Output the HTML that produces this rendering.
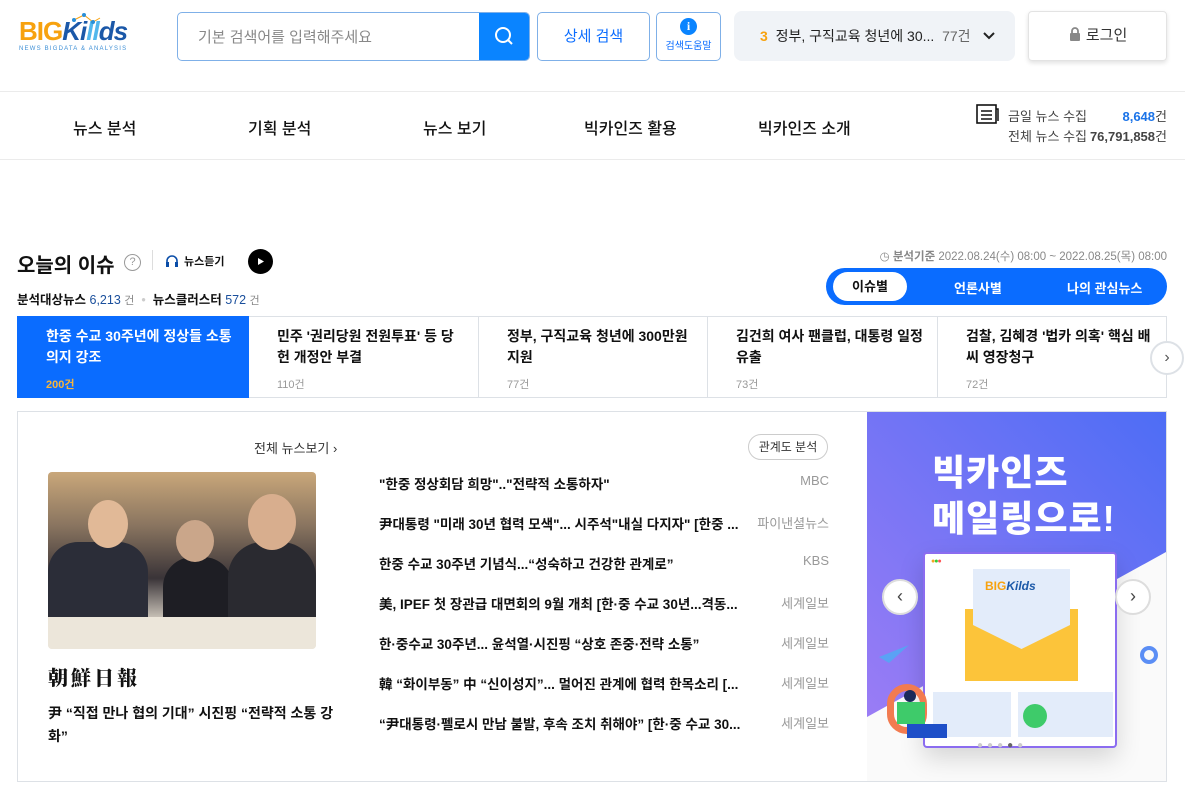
<!DOCTYPE html>
<html><head><meta charset="utf-8"><style>
*{box-sizing:border-box;margin:0;padding:0}
body{width:1185px;height:797px;overflow:hidden;background:#fff;font-family:"Liberation Sans","Noto Sans CJK KR",sans-serif;color:#111;position:relative}
.a{position:absolute}
.nav{font-size:16px;font-weight:500;top:115px}
.card{position:absolute;top:316px;height:82px;border:1px solid #dde1e6;border-left:none;padding:9px 0 0 28px;font-size:14px;font-weight:700;line-height:21px;color:#111}
.card small{display:block;font-size:11px;font-weight:400;color:#999;margin-top:7px}
.li{position:absolute;left:379px;width:450px;font-size:13.5px;font-weight:700;white-space:nowrap}
.li span{position:absolute;right:0;font-weight:400;color:#999;font-size:13px}
</style></head><body>
<!-- logo -->
<div class="a" style="left:19px;top:16px;font-size:26px;font-weight:900;letter-spacing:-1px;line-height:30px">
<span style="color:#f7a20f">BIG</span><span style="color:#1b58a8;font-style:italic">Ki</span><span style="color:#52b7ec;font-style:italic">ll</span><span style="color:#1b58a8;font-style:italic">ds</span></div>
<svg class="a" style="left:72px;top:12px" width="30" height="14"><polyline points="2,8 12,3 21,10 28,6" fill="none" stroke="#f7a20f" stroke-width="1"/><circle cx="2" cy="8" r="2" fill="#2a8fd8"/><circle cx="12" cy="3" r="2" fill="#2a8fd8"/><circle cx="21" cy="10" r="2" fill="#2a8fd8"/></svg>
<div class="a" style="left:19px;top:46px;font-size:6px;letter-spacing:1.2px;color:#3d8fd6">NEWS BIGDATA &amp; ANALYSIS</div>
<!-- search -->
<div class="a" style="left:177px;top:12px;width:353px;height:49px;border:1px solid #7fb0e8;border-radius:5px;overflow:hidden">
<div style="position:absolute;left:20px;top:13px;font-size:15px;color:#888">기본 검색어를 입력해주세요</div>
<div style="position:absolute;right:0;top:0;width:50px;height:47px;background:#0a84ff"><svg width="50" height="47"><circle cx="24" cy="22" r="7" fill="none" stroke="#fff" stroke-width="2"/><line x1="29" y1="27" x2="33" y2="31" stroke="#fff" stroke-width="2"/></svg></div></div>
<div class="a" style="left:537px;top:12px;width:113px;height:49px;border:1px solid #7fb0e8;border-radius:5px;color:#0a6cff;font-size:15px;text-align:center;line-height:47px">상세 검색</div>
<div class="a" style="left:656px;top:12px;width:65px;height:49px;border:1px solid #7fb0e8;border-radius:5px;text-align:center">
<div style="width:17px;height:17px;border-radius:50%;background:#0a84ff;color:#fff;font-size:12px;font-weight:700;line-height:17px;margin:5px auto 2px;font-family:'Liberation Serif',serif">i</div><div style="font-size:10px;color:#0a6cff">검색도움말</div></div>
<div class="a" style="left:734px;top:11px;width:281px;height:50px;background:#f0f3f7;border-radius:8px;font-size:14px;line-height:50px;padding-left:26px;color:#222"><b style="color:#f7a20f">3</b>&nbsp; 정부, 구직교육 청년에 30... <span style="color:#666">&nbsp;77건</span>
<svg style="position:absolute;right:20px;top:20px" width="12" height="10"><polyline points="1,2 6,7 11,2" fill="none" stroke="#222" stroke-width="2"/></svg></div>
<div class="a" style="left:1028px;top:11px;width:139px;height:50px;border:1px solid #e3e3e3;border-radius:4px;box-shadow:0 2px 5px rgba(0,0,0,.12);font-size:15px;line-height:48px;text-align:center;color:#333">
<svg width="14" height="15" style="vertical-align:-1px"><path d="M4 7V5a3 3 0 0 1 6 0v2" fill="none" stroke="#888" stroke-width="1.8"/><rect x="2" y="7" width="10" height="8" rx="1" fill="#888"/></svg> 로그인</div>
<div class="a" style="left:0;top:91px;width:1185px;height:1px;background:#ebebeb"></div>
<div class="a" style="left:0;top:159px;width:1185px;height:1px;background:#ebebeb"></div>
<div class="a nav" style="left:73px">뉴스 분석</div>
<div class="a nav" style="left:248px">기획 분석</div>
<div class="a nav" style="left:423px">뉴스 보기</div>
<div class="a nav" style="left:584px">빅카인즈 활용</div>
<div class="a nav" style="left:758px">빅카인즈 소개</div>
<svg class="a" style="left:976px;top:104px" width="24" height="22"><rect x="1" y="1" width="19" height="18" fill="none" stroke="#111" stroke-width="1.6"/><line x1="5" y1="7" x2="16" y2="7" stroke="#111" stroke-width="1.5"/><line x1="5" y1="11" x2="16" y2="11" stroke="#111" stroke-width="1.5"/><line x1="5" y1="15" x2="16" y2="15" stroke="#111" stroke-width="1.5"/><path d="M20 5h2v12" fill="none" stroke="#111" stroke-width="1.5"/></svg>
<div class="a" style="left:1008px;top:106px;font-size:13px;color:#444">금일 뉴스 수집</div>
<div class="a" style="left:1008px;top:126px;font-size:13px;color:#444">전체 뉴스 수집</div>
<div class="a" style="right:18px;top:106px;font-size:13px;color:#444"><b style="color:#1a73e8">8,648</b>건</div>
<div class="a" style="right:18px;top:126px;font-size:13px;color:#444"><b>76,791,858</b>건</div>
<!-- today's issue -->
<div class="a" style="left:17px;top:249px;font-size:20px;font-weight:700">오늘의 이슈</div>
<div class="a" style="left:124px;top:254px;width:17px;height:17px;border:1px solid #999;border-radius:50%;font-size:11px;color:#999;text-align:center;line-height:15px">?</div>
<div class="a" style="left:152px;top:250px;width:1px;height:20px;background:#ddd"></div>
<svg class="a" style="left:165px;top:254px" width="14" height="14"><path d="M2 10V7a5 5 0 0 1 10 0v3" fill="none" stroke="#0a4da8" stroke-width="1.6"/><rect x="1" y="8" width="3" height="5" fill="#0a4da8"/><rect x="10" y="8" width="3" height="5" fill="#0a4da8"/></svg>
<div class="a" style="left:184px;top:253px;font-size:11px;font-weight:700">뉴스듣기</div>
<div class="a" style="left:248px;top:249px;width:25px;height:25px;border-radius:50%;background:#000"><svg width="25" height="25"><path d="M10 9l6 3.5-6 3.5z" fill="#fff"/></svg></div>
<div class="a" style="left:17px;top:289px;font-size:12.5px"><b>분석대상뉴스</b> <span style="color:#1a4f9c">6,213</span> <span style="color:#888;font-size:11px">건</span> <span style="color:#ccc">&nbsp;•&nbsp;</span> <b>뉴스클러스터</b> <span style="color:#1a4f9c">572</span> <span style="color:#888;font-size:11px">건</span></div>
<div class="a" style="right:18px;top:248px;font-size:11.5px;color:#888">◷ <b>분석기준</b> 2022.08.24(수) 08:00 ~ 2022.08.25(목) 08:00</div>
<div class="a" style="left:826px;top:268px;width:341px;height:37px;border-radius:19px;background:#0a6cff">
<div style="position:absolute;left:7px;top:4px;width:74px;height:29px;background:#fff;border-radius:15px;text-align:center;line-height:29px;font-size:13px;font-weight:700">이슈별</div>
<div style="position:absolute;left:128px;top:10px;color:#fff;font-size:13px;font-weight:700">언론사별</div>
<div style="position:absolute;left:241px;top:10px;color:#fff;font-size:13px;font-weight:700">나의 관심뉴스</div></div>
<div class="card" style="left:17px;width:232px;background:#0a6cff;border:1px solid #0a6cff;color:#fff">한중 수교 30주년에 정상들 소통<br>의지 강조<small style="color:#f7b53b;font-weight:700">200건</small></div>
<div class="card" style="left:249px;width:230px">민주 '권리당원 전원투표' 등 당<br>헌 개정안 부결<small>110건</small></div>
<div class="card" style="left:479px;width:229px">정부, 구직교육 청년에 300만원<br>지원<small>77건</small></div>
<div class="card" style="left:708px;width:230px">김건희 여사 팬클럽, 대통령 일정<br>유출<small>73건</small></div>
<div class="card" style="left:938px;width:229px">검찰, 김혜경 '법카 의혹' 핵심 배<br>씨 영장청구<small>72건</small></div>
<div class="a" style="left:1150px;top:341px;width:34px;height:34px;border-radius:50%;background:#fff;border:2px solid #dde1e6;text-align:center;line-height:30px;color:#555;font-size:16px">›</div>
<!-- main -->
<div class="a" style="left:17px;top:411px;width:1150px;height:371px;border:1px solid #dde1e6"></div>
<div class="a" style="left:254px;top:438px;font-size:13px;color:#333">전체 뉴스보기 ›</div>
<div class="a" style="left:48px;top:472px;width:268px;height:177px;border-radius:4px;overflow:hidden;background:linear-gradient(180deg,#c9a77a 0%,#8a7560 30%,#3a3438 60%,#d9d2c6 85%,#efe9df 100%)">
<div style="position:absolute;left:0;top:70px;width:100px;height:80px;background:#2b2d38;border-radius:30px 30px 0 0"></div>
<div style="position:absolute;left:40px;top:28px;width:40px;height:48px;background:#e1b997;border-radius:50%"></div>
<div style="position:absolute;left:115px;top:85px;width:70px;height:70px;background:#1e1e24;border-radius:30px 30px 0 0"></div>
<div style="position:absolute;left:128px;top:48px;width:38px;height:42px;background:#caa68a;border-radius:50%"></div>
<div style="position:absolute;left:180px;top:70px;width:88px;height:90px;background:#2a2a30;border-radius:35px 35px 0 0"></div>
<div style="position:absolute;left:200px;top:22px;width:48px;height:56px;background:#d8ae8e;border-radius:50%"></div>
<div style="position:absolute;left:0;top:145px;width:268px;height:32px;background:#ece6da"></div></div>
<div class="a" style="left:48px;top:662px;font-size:20px;font-weight:900;font-family:'Noto Serif CJK SC',serif;letter-spacing:3px">朝鮮日報</div>
<div class="a" style="left:48px;top:702px;width:290px;font-size:14px;font-weight:700;line-height:23px">尹 “직접 만나 협의 기대” 시진핑 “전략적 소통 강화”</div>
<div class="a" style="left:748px;top:434px;width:80px;height:26px;border:1px solid #ccc;border-radius:13px;font-size:12px;text-align:center;line-height:24px;color:#333">관계도 분석</div>
<div class="li" style="top:473px">"한중 정상회담 희망".."전략적 소통하자"<span>MBC</span></div>
<div class="li" style="top:513px">尹대통령 "미래 30년 협력 모색"... 시주석"내실 다지자" [한중 ...<span>파이낸셜뉴스</span></div>
<div class="li" style="top:553px">한중 수교 30주년 기념식...“성숙하고 건강한 관계로”<span>KBS</span></div>
<div class="li" style="top:593px">美, IPEF 첫 장관급 대면회의 9월 개최 [한·중 수교 30년...격동...<span>세계일보</span></div>
<div class="li" style="top:633px">한·중수교 30주년... 윤석열·시진핑 “상호 존중·전략 소통”<span>세계일보</span></div>
<div class="li" style="top:673px">韓 “화이부동” 中 “신이성지”... 멀어진 관계에 협력 한목소리 [...<span>세계일보</span></div>
<div class="li" style="top:713px">“尹대통령·펠로시 만남 불발, 후속 조치 취해야” [한·중 수교 30...<span>세계일보</span></div>
<!-- banner -->
<div class="a" style="left:867px;top:412px;width:299px;height:369px;overflow:hidden;background:#fafafa">
<svg width="299" height="369" style="position:absolute;left:0;top:0"><defs><linearGradient id="g" x1="0" y1="1" x2="1" y2="0"><stop offset="0" stop-color="#9a7cf5"/><stop offset="1" stop-color="#4d6df5"/></linearGradient></defs><polygon points="0,0 299,0 299,140 0,305" fill="url(#g)"/>
<circle cx="282" cy="243" r="7" fill="none" stroke="#5b8ef5" stroke-width="4"/><path d="M12 245l30-12-20 18z" fill="#5aa2f5"/></svg>
<div style="position:absolute;left:65px;top:38px;font-size:36px;font-weight:900;color:#fff;line-height:46px;letter-spacing:1px">빅카인즈<br>메일링으로!</div>
<div style="position:absolute;left:56px;top:140px;width:194px;height:196px;background:#fff;border:2px solid #8b6cf0;border-radius:4px;box-shadow:0 10px 25px rgba(0,0,0,.15)">
<div style="position:absolute;left:6px;top:4px;font-size:7px;color:#f5a623;letter-spacing:-1px">●<span style="color:#3c3">●</span><span style="color:#f55">●</span></div>
<div style="position:absolute;left:40px;top:55px;width:113px;height:72px;background:#fcc43a"></div>
<div style="position:absolute;left:48px;top:15px;width:97px;height:80px;background:#e3ecfa;clip-path:polygon(0 0,100% 0,100% 70%,50% 100%,0 70%)"></div>
<div style="position:absolute;left:60px;top:25px;font-size:12px;font-weight:900;color:#f7a20f">BIG<span style="color:#1b58a8;font-style:italic">Kilds</span></div>
<div style="position:absolute;left:8px;top:138px;width:78px;height:45px;background:#e3ecfa"></div>
<div style="position:absolute;left:93px;top:138px;width:95px;height:45px;background:#e3ecfa"></div>
<div style="position:absolute;left:98px;top:150px;width:24px;height:24px;border-radius:50%;background:#3ecb6a"></div>
</div>
<div style="position:absolute;left:20px;top:272px;width:40px;height:50px;border:7px solid #f27b50;border-radius:20px"></div>
<div style="position:absolute;left:30px;top:290px;width:28px;height:22px;background:#3ecb6a"></div>
<div style="position:absolute;left:37px;top:278px;width:12px;height:12px;border-radius:50%;background:#1a2a5a"></div>
<div style="position:absolute;left:40px;top:312px;width:40px;height:14px;background:#1e4fc8"></div>
<div style="position:absolute;left:110px;top:328px;font-size:10px;color:#ccc;letter-spacing:4px">●●●<span style="color:#666">●</span>●</div>
<div style="position:absolute;left:15px;top:167px;width:36px;height:36px;border-radius:50%;background:#fff;border:2px solid #ddd;text-align:center;line-height:31px;font-size:18px;color:#444">‹</div>
<div style="position:absolute;left:248px;top:167px;width:36px;height:36px;border-radius:50%;background:#fff;border:2px solid #ddd;text-align:center;line-height:31px;font-size:18px;color:#444">›</div>
</div>
</body></html>
